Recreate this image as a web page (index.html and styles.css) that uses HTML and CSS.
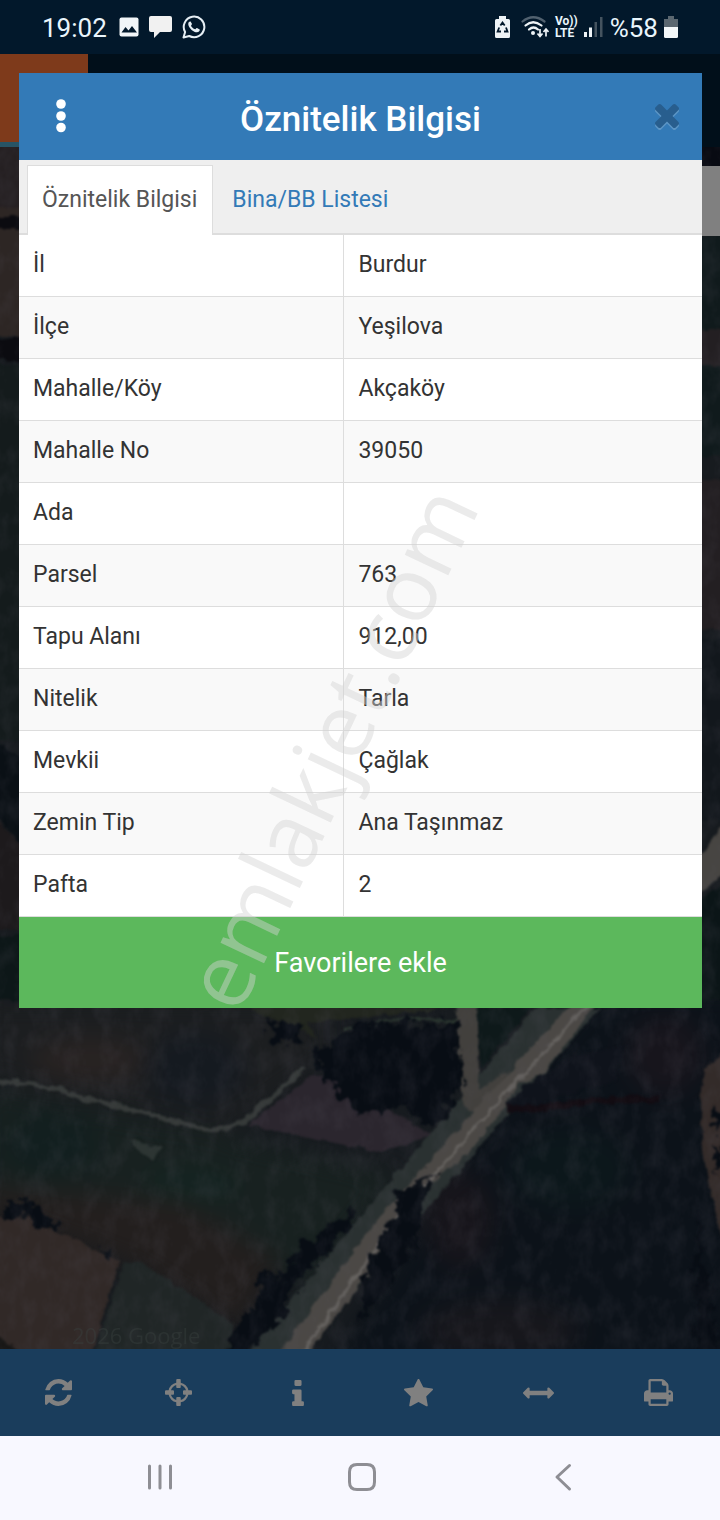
FILE: index.html
```html
<!DOCTYPE html>
<html lang="tr">
<head>
<meta charset="utf-8">
<meta name="viewport" content="width=device-width, initial-scale=1">
<title>Öznitelik Bilgisi</title>
<link rel="stylesheet" href="styles.css">
</head>
<body>
<header class="status">
  <div class="status-group">
    <time class="clock">19:02</time>
    <svg class="st-photo" width="20" height="20" viewBox="0 0 20 20" aria-hidden="true"><rect x="0.5" y="0.5" width="19" height="19" rx="2" fill="#f1f5f8"/><path d="M2.5 15.5 6.5 10l3 3.5 3.5-4.500 5 6.500z" fill="#02182b"/></svg>
    <svg class="st-chat" width="23" height="22" viewBox="0 0 23 22" aria-hidden="true"><path d="M2 0h19q2 0 2 2v12q0 2-2 2H11l-6 6v-6H2q-2 0-2-2V2Q0 0 2 0z" fill="#f1f1f1"/></svg>
    <svg class="st-wa" width="24" height="24" viewBox="0 0 24 24" aria-hidden="true"><path d="M1.500 22.500 3.100 17A10.300 10.300 0 1 1 7.200 21z" fill="none" stroke="#e6eef4" stroke-width="2" stroke-linejoin="round"/><path d="M8.600 6.500c-.6-.3-1.200 0-1.700.6-1 1.300-.8 3 .3 4.800 1.400 2.300 3.200 4 5.600 5 1.900.8 3.600.5 4.600-.8.400-.6.500-1.300.3-1.700l-2.700-1.400c-.5-.2-.9.5-1.600 1.200-.6.300-2-.6-3.100-1.700-.7-.8-1.300-1.700-1.200-2.100.5-.6 1-1 .8-1.600z" fill="#e6eef4"/></svg>
  </div>
  <div class="status-group status-right">
    <svg width="15" height="22" viewBox="0 0 15 22" aria-hidden="true"><path d="M4 0h7v3h2.500q1.500 0 1.500 1.500v16q0 1.500-1.500 1.500h-12Q0 22 0 20.500v-16Q0 3 1.500 3H4z" fill="#eef3f6"/><path d="M5.400 9.500 7.500 6.500l2.200 3M11 11.500l1.500 4H9M6 15.500H2.600l1.600-4" fill="none" stroke="#02182b" stroke-width="1.800"/></svg>
    <svg class="st-wifi" width="28" height="23" viewBox="0 0 28 23" aria-hidden="true"><g fill="none" stroke-linecap="round"><path d="M1.500 5.500Q12 -3 23.500 5.500" stroke="#51616f" stroke-width="2.200"/><path d="M4.500 9.500Q12 3 20.500 9.500M8 13.500q4.500-4 9 0" stroke="#eef3f6" stroke-width="2.200"/></g><circle cx="12" cy="17" r="2" fill="#eef3f6"/><path d="M19 13v7M16.500 17.500 19 20.500l2.500-3M25 20.500v-7M22.500 16l2.500-3 2.500 3" fill="none" stroke="#eef3f6" stroke-width="1.700"/></svg>
    <span class="volte"><span>Vo))</span><span>LTE</span></span>
    <svg class="st-signal" width="19" height="20" viewBox="0 0 19 20" aria-hidden="true"><path d="M0 15h3v5H0zM5 10.500h3V20H5z" fill="#eef3f6"/><path d="M10.500 5h2.500v15h-2.500zM16 0h2.500v20H16z" fill="#44535f"/></svg>
    <span class="clock">%58</span>
    <svg width="14" height="22" viewBox="0 0 14 22" aria-hidden="true"><path d="M4 0h6v3h4v8H0V3h4z" fill="#5b6770"/><path d="M0 11h14v9.500q0 1.500-1.500 1.500h-11Q0 22 0 20.500z" fill="#f3f7f9"/></svg>
  </div>
</header>

<main class="stage">
  <svg class="map" viewBox="0 54 720 1295" preserveAspectRatio="xMidYMin slice" aria-hidden="true">
    <defs>
      <filter id="soft" x="-10%" y="-10%" width="120%" height="120%" color-interpolation-filters="sRGB"><feGaussianBlur stdDeviation="12"/></filter>
      <filter id="edge" color-interpolation-filters="sRGB"><feTurbulence type="fractalNoise" baseFrequency="0.09" numOctaves="3" seed="4" result="n"/><feDisplacementMap in="SourceGraphic" in2="n" xChannelSelector="R" yChannelSelector="G" scale="8"/><feGaussianBlur stdDeviation="1"/></filter>
      <filter id="tree" color-interpolation-filters="sRGB"><feTurbulence type="fractalNoise" baseFrequency="0.09" numOctaves="3" seed="9" result="n"/><feDisplacementMap in="SourceGraphic" in2="n" xChannelSelector="R" yChannelSelector="G" scale="26"/><feGaussianBlur stdDeviation="1"/></filter>
      <filter id="grain" x="0" y="0" width="100%" height="100%" color-interpolation-filters="sRGB"><feTurbulence type="fractalNoise" baseFrequency="0.06 0.04" numOctaves="4" seed="12"/><feColorMatrix values="0 0 0 0 .34  0 0 0 0 .33  0 0 0 0 .37  2 0 0 0 -.8"/></filter>
    </defs>
    <rect y="54" width="720" height="1295" fill="#171b1f"/>
    <g filter="url(#soft)">
      <path d="M-20 1000h350v60l-105 72L-20 1075z" fill="#1c1e20"/>
      <ellipse cx="90" cy="1060" rx="60" ry="22" fill="#282322"/>
      <ellipse cx="195" cy="1070" rx="50" ry="38" fill="#151a20"/>
      <path d="M-20 1085l245 50 175 40-90 110L-20 1190z" fill="#182120"/>
      <ellipse cx="50" cy="1145" rx="50" ry="32" fill="#121f1f"/>
      <ellipse cx="190" cy="1185" rx="50" ry="16" fill="#142421"/>
      <path d="M-20 1185l200 15 100 60-40 70L130 1265-20 1210z" fill="#231f1e"/>
      <path d="M600 990h150v380H330l160-255z" fill="#0c1219"/>
      <ellipse cx="665" cy="1055" rx="40" ry="40" fill="#17151c"/>
      <ellipse cx="460" cy="1220" rx="35" ry="48" fill="#17151b"/>
      <ellipse cx="500" cy="1330" rx="80" ry="30" fill="#17171c"/>
      <ellipse cx="570" cy="1170" rx="60" ry="40" fill="#0c171b"/>
    </g>
    <g filter="url(#edge)">
      <path d="M-10 1216l38 2 92 43-30 98H-10z" fill="#312927"/>
      <path d="M124 1262l-32 97h142v-35l-92-62z" fill="#202626"/>
      <path d="M-10 1330l35 25H-10z" fill="#181716"/>
      <path d="M312 1075l20 2 65 36 35 22-50 18-75-16-60-12z" fill="#2b262e"/>
      <path d="M236 1003l80 34-10-14 150-15z" fill="#22261f"/>
      <path d="M-10 1081q48 0 88 15l125 33q25 3 42-8l60-53" fill="none" stroke="#363a39" stroke-width="5"/>
      <path d="M345 1031q60-20 112-8" fill="none" stroke="#2a352f" stroke-width="3"/>
      <path d="M535 1008L245 1355h55L600 1008z" fill="#2a3131"/>
      <path d="M455 1000h23l1 90 30-20-30 50-18-20z" fill="#42403d"/>
      <path d="M477 1008l4 60 50-60z" fill="#0e191a"/>
      <path d="M572 1003L480 1104 370 1228 276 1359h28l56-75 29-31-5-18 44-50 32-23 36-43 22-34 24-11 38-48 20-31z" fill="#4b4845"/>
      <path d="M590 1003l-94 101-100 115-95 136" fill="none" stroke="#65625f" stroke-width="3"/>
      <path d="M505 1105l20-20 50-30 50-10-10 35-100 32z" fill="#0f131b"/>
      <path d="M505 1109h30l55-8 70-2" stroke="#120c12" stroke-width="7" fill="none"/>
      <path d="M130 1141l32 6-10 15z" fill="#2d3533"/>
      <path d="M704 1070q-8 60 6 120l15 60V1050z" fill="#332b29"/>
    </g>
    <g filter="url(#tree)" fill="#080d14">
      <path d="M314 1054l46-32 98 2 4 62-26 40-25-8-10-15-41 12-30-30z"/>
      <path d="M265 1022l32 2 3 20-25-3z"/>
      <path d="M8 1200l18-2 32 30-8 3-26-16-18 3zM103 1244l10 10-5 6z"/>
      <path d="M262 1270l18 6 10 35-20 15-25 33h-22l15-45 20-5zM300 1245l55-35-10 22-65 70-18 12z"/>
      <path d="M360 1292l40-100 32-20-20 80-50 70zM714 1105l15 15-17 10zM713 1145l15 8-10 20zM695 1210l12 60 13 89h-23z"/>
    </g>
    <g filter="url(#edge)">
      <path d="M-10 137h35v70h-35z" fill="#252022"/><path d="M-10 207h35v130h-35z" fill="#2d2624"/><path d="M-10 217h35v12h-35zM-10 342l35-6v26l-35-3z" fill="#0b0b10"/><path d="M-10 365h35v375h-35z" fill="#141b1c"/><path d="M-10 740l35 20v90L-10 806z" fill="#0a1015"/><path d="M-10 810l35 40v80h-35z" fill="#1d1a1c"/><path d="M-10 935h35v65h-35z" fill="#0d1718"/>
      <path d="M695 142h40v28h-40z" fill="#080a12"/><path d="M695 236h40v220h-40z" fill="#101a1c"/><path d="M695 330h40v35h-40zM695 480h40v150h-40z" fill="#231f22"/><path d="M695 640h40v180h-40z" fill="#12171c"/><path d="M695 864l35-50v55l-35 28z" fill="#474542"/><path d="M695 902l35-22v120h-35z" fill="#0b1517"/>
    </g>
    <rect y="147" width="720" height="1202" filter="url(#grain)" opacity="0.180"/>
    <text class="credit" x="72" y="1344">2026 Google</text>
    <rect y="54" width="720" height="93" fill="#010f1a"/>
    <rect y="142" width="88" height="5" fill="#275465"/>
    <rect y="54" width="88" height="88" fill="#7e3a1b"/>
    <rect x="690" y="166" width="30" height="70" fill="#808080"/>
  </svg>

  <section class="dialog" role="dialog" aria-labelledby="dlg-title">
    <div class="dlg-head">
      <button class="icon-btn" type="button" aria-label="Menü"><svg class="dots" width="10" height="34" viewBox="0 0 10 34"><g fill="#fff"><circle cx="5" cy="5" r="4.800"/><circle cx="5" cy="17" r="4.800"/><circle cx="5" cy="28.500" r="4.800"/></g></svg></button>
      <h1 class="dlg-title" id="dlg-title">Öznitelik Bilgisi</h1>
      <button class="icon-btn" type="button" aria-label="Kapat"><svg class="close" width="24" height="24" viewBox="110 366 1188 1188"><path fill="#285e8e" d="M1298 1322q0 40-28 68l-136 136q-28 28-68 28t-68-28l-294-294-294 294q-28 28-68 28t-68-28l-136-136q-28-28-28-68t28-68l294-294-294-294q-28-28-28-68t28-68l136-136q28-28 68-28t68 28l294 294 294-294q28-28 68-28t68 28l136 136q28 28 28 68t-28 68l-294 294 294 294q28 28 28 68z"/></svg></button>
    </div>
    <nav class="tabs">
      <a class="tab tab-on" href="#oznitelik">Öznitelik Bilgisi</a>
      <a class="tab" href="#bina">Bina/BB Listesi</a>
    </nav>
    <table class="props" id="oznitelik">
      <tbody>
        <tr><th scope="row">İl</th><td>Burdur</td></tr>
        <tr><th scope="row">İlçe</th><td>Yeşilova</td></tr>
        <tr><th scope="row">Mahalle/Köy</th><td>Akçaköy</td></tr>
        <tr><th scope="row">Mahalle No</th><td>39050</td></tr>
        <tr><th scope="row">Ada</th><td></td></tr>
        <tr><th scope="row">Parsel</th><td>763</td></tr>
        <tr><th scope="row">Tapu Alanı</th><td>912,00</td></tr>
        <tr><th scope="row">Nitelik</th><td>Tarla</td></tr>
        <tr><th scope="row">Mevkii</th><td>Çağlak</td></tr>
        <tr><th scope="row">Zemin Tip</th><td>Ana Taşınmaz</td></tr>
        <tr><th scope="row">Pafta</th><td>2</td></tr>
      </tbody>
    </table>
    <button class="fav" type="button">Favorilere ekle</button>
  </section>

  <svg class="watermark" viewBox="0 54 720 1295" preserveAspectRatio="xMidYMin slice" aria-hidden="true"><text transform="translate(239 1016) rotate(-64.600)">emlakjet.com</text></svg>
</main>

<nav class="toolbar">
  <button class="tool" type="button" aria-label="Yenile"><svg width="27" height="27" viewBox="0 128 1536 1536"><path d="M1511 1056q0 5-1 7-64 268-268 434.500t-478 166.500q-146 0-282.500-55t-243.500-157l-129 129q-19 19-45 19t-45-19-19-45v-448q0-26 19-45t45-19h448q26 0 45 19t19 45-19 45l-137 137q71 66 161 102t187 36q134 0 250-65t186-179q11-17 53-117 8-23 30-23h192q13 0 22.500 9.500t9.500 22.500zm25-800v448q0 26-19 45t-45 19h-448q-26 0-45-19t-19-45 19-45l138-138q-148-137-349-137-134 0-250 65t-186 179q-11 17-53 117-8 23-30 23h-199q-13 0-22.500-9.500t-9.500-22.500v-7q65-268 270-434.500t480-166.500q146 0 284 55.500t245 156.500l130-129q19-19 45-19t45 19 19 45z"/></svg></button>
  <button class="tool" type="button" aria-label="Konum"><svg width="27" height="27" viewBox="0 64 1536 1536"><path d="M1197 960h-109q-26 0-45-19t-19-45v-128q0-26 19-45t45-19h109q-32-108-112.500-188.500t-188.500-112.500v109q0 26-19 45t-45 19h-128q-26 0-45-19t-19-45v-109q-108 32-188.500 112.500t-112.500 188.500h109q26 0 45 19t19 45v128q0 26-19 45t-45 19h-109q32 108 112.500 188.500t188.500 112.500v-109q0-26 19-45t45-19h128q26 0 45 19t19 45v109q108-32 188.500-112.500t112.500-188.500zm339-192v128q0 26-19 45t-45 19h-143q-37 161-154.500 278.500t-278.500 154.500v143q0 26-19 45t-45 19h-128q-26 0-45-19t-19-45v-143q-161-37-278.500-154.500t-154.500-278.500h-143q-26 0-45-19t-19-45v-128q0-26 19-45t45-19h143q37-161 154.500-278.500t278.500-154.500v-143q0-26 19-45t45-19h128q26 0 45 19t19 45v143q161 37 278.500 154.500t154.500 278.500h143q26 0 45 19t19 45z"/></svg></button>
  <button class="tool" type="button" aria-label="Bilgi"><svg width="12" height="26" viewBox="0 128 640 1408"><path d="M640 1344v128q0 26-19 45t-45 19h-512q-26 0-45-19t-19-45v-128q0-26 19-45t45-19h64v-384h-64q-26 0-45-19t-19-45v-128q0-26 19-45t45-19h384q26 0 45 19t19 45v576h64q26 0 45 19t19 45zm-128-1152v192q0 26-19 45t-45 19h-256q-26 0-45-19t-19-45v-192q0-26 19-45t45-19h256q26 0 45 19t19 45z"/></svg></button>
  <button class="tool" type="button" aria-label="Favoriler"><svg width="29" height="28" viewBox="0 59 1664 1587"><path d="M1664 647q0 22-26 48l-363 354 86 500q1 7 1 20 0 21-10.500 35.500t-30.500 14.500q-19 0-40-12l-449-236-449 236q-22 12-40 12-21 0-31.500-14.500t-10.500-35.500q0-6 2-20l86-500-364-354q-25-27-25-48 0-37 56-46l502-73 225-455q19-41 49-41t49 41l225 455 502 73q56 9 56 46z"/></svg></button>
  <button class="tool" type="button" aria-label="Ölç"><svg width="31" height="12" viewBox="0 576 1792 640"><path d="M1792 896q0 26-19 45l-256 256q-19 19-45 19t-45-19-19-45v-128h-1024v128q0 26-19 45t-45 19-45-19l-256-256q-19-19-19-45t19-45l256-256q19-19 45-19t45 19 19 45v128h1024v-128q0-26 19-45t45-19 45 19l256 256q19 19 19 45z"/></svg></button>
  <button class="tool" type="button" aria-label="Yazdır"><svg width="29" height="27" viewBox="0 128 1664 1536"><path d="M384 1536h896v-256h-896v256zm0-640h896v-384h-160q-40 0-68-28t-28-68v-160h-640v640zm1152 64q0-26-19-45t-45-19-45 19-19 45 19 45 45 19 45-19 19-45zm128 0v416q0 13-9.500 22.500t-22.500 9.500h-224v160q0 40-28 68t-68 28h-960q-40 0-68-28t-28-68v-160h-224q-13 0-22.500-9.500t-9.500-22.500v-416q0-79 56.500-135.500t135.500-56.500h64v-544q0-40 28-68t68-28h672q40 0 88 20t76 48l152 152q28 28 48 76t20 88v256h64q79 0 135.500 56.500t56.500 135.500z"/></svg></button>
</nav>

<nav class="sysnav">
  <button class="sys" type="button" aria-label="Son uygulamalar"><svg width="30" height="30" viewBox="0 0 30 30"><path d="M4.500 4v22M15 4v22M25.500 4v22"/></svg></button>
  <button class="sys" type="button" aria-label="Ana ekran"><svg width="30" height="30" viewBox="0 0 30 30"><path d="M10 2.500h10q7.500 0 7.500 7.500v10q0 7.500-7.500 7.500H10q-7.500 0-7.500-7.500V10q0-7.500 7.500-7.500z"/></svg></button>
  <button class="sys" type="button" aria-label="Geri"><svg width="30" height="30" viewBox="0 0 30 30"><path d="M21.500 3.500 9 15l12.500 12"/></svg></button>
</nav>
</body>
</html>
```
FILE: styles.css
```css
* { box-sizing: border-box; }

body {
  margin: 0;
  min-height: 100vh;
  display: flex;
  flex-direction: column;
  background: #02182b;
  font-family: Roboto, "Liberation Sans", sans-serif;
  color: #333;
}

button {
  margin: 0;
  padding: 0;
  border: 0;
  background: none;
  font-family: inherit;
}

svg { display: block; flex: none; }

.status {
  height: 54px;
  padding: 0 42px;
  display: flex;
  align-items: center;
  justify-content: space-between;
  color: #e9f5fc;
}

.status-group { display: flex; align-items: center; gap: 10px; }
.status-right { gap: 6px; }
.clock { padding-top: 2px; font-size: 26px; line-height: 32px; }
.st-photo { margin-left: 2px; }
.st-wifi { margin-left: 5px; }
.st-signal { margin-right: 1px; }

.volte {
  display: flex;
  flex-direction: column;
  font-size: 12px;
  line-height: 12px;
  font-weight: 700;
}

.stage {
  flex: 1;
  position: relative;
  overflow: hidden;
  padding: 19px 18px 24px 19px;
  background: #171b1f;
}

.map,
.watermark {
  position: absolute;
  inset: 0;
  width: 100%;
  height: 100%;
}

.credit {
  font-family: "Open Sans", sans-serif;
  font-size: 22px;
  fill: #3a4240;
  opacity: 0.4;
}

.watermark { pointer-events: none; }

.watermark text {
  font-family: "Open Sans", sans-serif;
  font-size: 90px;
  fill: #d3d3d3;
  fill-opacity: 0.45;
}

.dialog { position: relative; background: #fff; }

.dlg-head {
  height: 87px;
  padding: 0 23px 0 30px;
  display: flex;
  align-items: center;
  background: #337ab7;
}

.icon-btn {
  width: 24px;
  height: 44px;
  display: flex;
  align-items: center;
  justify-content: center;
}

.dots { margin-bottom: 2px; }

.close {
  margin-bottom: 2px;
  filter: drop-shadow(0 2px 0 #5c95c5);
}

.dlg-title {
  flex: 1;
  margin: 0;
  padding: 6px 7px 0 0;
  font-size: 35px;
  line-height: 40px;
  font-weight: 500;
  text-align: center;
  color: #fff;
}

.tabs {
  display: flex;
  gap: 4px;
  padding: 5px 8px 0;
  background: #efefef;
  border-bottom: 2px solid #ddd;
}

.tab {
  padding: 17px 15px 17px 14px;
  border: 1px solid transparent;
  border-bottom: 0;
  font-size: 23px;
  line-height: 33px;
  color: #337ab7;
  text-decoration: none;
}

.tab-on {
  margin-bottom: -2px;
  border-color: #ddd;
  background: #fff;
  color: #555;
}

.props {
  width: 100%;
  border-spacing: 0;
  table-layout: fixed;
  font-size: 23px;
  line-height: 33px;
}

.props th,
.props td {
  height: 62px;
  padding: 13px 14px 15px;
  border-bottom: 1px solid #ddd;
  text-align: left;
  font-weight: 400;
  vertical-align: top;
}

.props th { width: 47.5%; }
.props td { border-left: 1px solid #ddd; }
.props tr:nth-child(even) { background: #f9f9f9; }

.fav {
  display: block;
  width: 100%;
  height: 91px;
  background: #5cb85c;
  color: #fff;
  font-size: 27px;
}

.toolbar {
  height: 87px;
  display: flex;
  background: #1a3d5c;
}

.tool {
  flex: 1;
  display: flex;
  align-items: center;
  justify-content: center;
  padding-right: 4px;
  fill: #808080;
}

.sysnav {
  height: 84px;
  padding: 0 56px 2px 59px;
  display: flex;
  background: #f8f8ff;
}

.sys {
  flex: 1;
  display: flex;
  align-items: center;
  justify-content: center;
  fill: none;
  stroke: #8e8e94;
  stroke-width: 3;
  stroke-linecap: round;
  stroke-linejoin: round;
}
```
